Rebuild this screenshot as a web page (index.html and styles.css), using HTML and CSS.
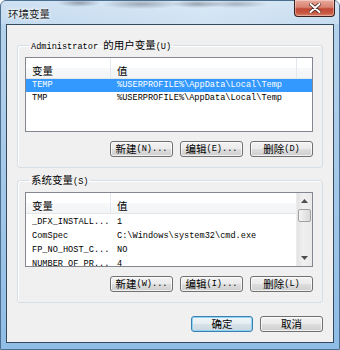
FILE: index.html
```html
<!DOCTYPE html>
<html lang="zh-CN">
<head>
<meta charset="utf-8">
<title>环境变量</title>
<link rel="stylesheet" href="styles.css">
</head>
<body>
<div class="window">
  <div class="titlebar">
    <span class="title">环境变量</span>
    <div class="close">
      <svg width="12" height="10" viewBox="0 0 12 10">
        <path d="M1.5 1 L10.5 9 M10.5 1 L1.5 9" stroke="#4a2a24" stroke-width="3.6" stroke-linecap="round"/>
        <path d="M1.5 1 L10.5 9 M10.5 1 L1.5 9" stroke="#ffffff" stroke-width="2" stroke-linecap="round"/>
      </svg>
    </div>
  </div>
  <div class="client">
    <fieldset class="group">
      <legend><span class="m">Administrator </span>的用户变量<span class="m">(U)</span></legend>
      <div class="list">
        <div class="hdr">
          <span class="c1">变量</span><span class="c2">值</span><span class="c3"></span>
        </div>
        <div class="row sel"><span class="c1 m">TEMP</span><span class="c2 m">%USERPROFILE%\AppData\Local\Temp</span></div>
        <div class="row"><span class="c1 m">TMP</span><span class="c2 m">%USERPROFILE%\AppData\Local\Temp</span></div>
      </div>
      <div class="btns">
        <button class="btn">新建<span class="m">(N)...</span></button>
        <button class="btn">编辑<span class="m">(E)...</span></button>
        <button class="btn">删除<span class="m">(D)</span></button>
      </div>
    </fieldset>
    <fieldset class="group g2">
      <legend>系统变量<span class="m">(S)</span></legend>
      <div class="list list2">
        <div class="lbody">
          <div class="hdr">
            <span class="c1">变量</span><span class="c2">值</span>
          </div>
          <div class="row"><span class="c1 m">_DFX_INSTALL...</span><span class="c2 m">1</span></div>
          <div class="row"><span class="c1 m">ComSpec</span><span class="c2 m">C:\Windows\system32\cmd.exe</span></div>
          <div class="row"><span class="c1 m">FP_NO_HOST_C...</span><span class="c2 m">NO</span></div>
          <div class="row"><span class="c1 m">NUMBER_OF_PR...</span><span class="c2 m">4</span></div>
        </div>
        <div class="sbar">
          <div class="arrow up"><svg width="7" height="4" viewBox="0 0 7 4"><path d="M0 4 L3.5 0 L7 4Z" fill="#4d4d4d"/></svg></div>
          <div class="thumb"></div>
          <div class="track"></div>
          <div class="arrow down"><svg width="7" height="4" viewBox="0 0 7 4"><path d="M0 0 L3.5 4 L7 0Z" fill="#4d4d4d"/></svg></div>
        </div>
      </div>
      <div class="btns">
        <button class="btn">新建<span class="m">(W)...</span></button>
        <button class="btn">编辑<span class="m">(I)...</span></button>
        <button class="btn">删除<span class="m">(L)</span></button>
      </div>
    </fieldset>
    <div class="dlgbtns">
      <button class="btn def">确定</button>
      <button class="btn">取消</button>
    </div>
  </div>
</div>
</body>
</html>
```
FILE: styles.css
```css
html, body {
  margin: 0;
  padding: 0;
  overflow: hidden;
}
body {
  width: 340px;
  height: 350px;
  font-family: "Noto Sans CJK SC", "Noto Sans", sans-serif;
  font-size: 10.5px;
  color: #000;
}
.window {
  box-sizing: border-box;
  width: 340px;
  height: 350px;
  border: 1px solid #4d6f8f;
  border-radius: 6px 6px 0 0;
  padding: 0 5px 6px 5px;
  background: linear-gradient(180deg, #c6dcf0 0%, #b5d2ec 8%, #a9cbe9 40%, #8fbde6 100%);
  display: flex;
  flex-direction: column;
}
.titlebar {
  height: 23px;
  display: flex;
  justify-content: space-between;
  align-items: flex-start;
  background:
    radial-gradient(ellipse 22px 4px at 78px 2px, rgba(70,80,95,0.45), rgba(70,80,95,0) 100%),
    radial-gradient(ellipse 40px 5px at 140px 3px, rgba(70,80,95,0.4), rgba(70,80,95,0) 100%),
    radial-gradient(ellipse 26px 4px at 196px 3px, rgba(70,80,95,0.45), rgba(70,80,95,0) 100%),
    radial-gradient(ellipse 32px 4px at 235px 3px, rgba(70,80,95,0.35), rgba(70,80,95,0) 100%),
    linear-gradient(90deg, rgba(255,255,255,0.15), rgba(255,255,255,0.35) 60%, rgba(255,255,255,0.2));
  margin: 0 -5px;
  padding: 0 5px;
}
.title {
  margin-top: 6px;
  margin-left: 2px;
  font-size: 10.5px;
  line-height: 14px;
  color: #1a1a1a;
  text-shadow: 0 0 4px #fff, 0 0 3px #fff;
}
.close {
  width: 39px;
  height: 16px;
  margin-right: -1px;
  margin-top: -1px;
  border: 1px solid #3b1f1a;
  border-top: none;
  border-radius: 0 0 4px 4px;
  background: linear-gradient(180deg, #e9a99a 0%, #d98373 45%, #c24a37 55%, #c8563f 80%, #d9826c 100%);
  box-shadow: inset 0 0 0 1px rgba(255,255,255,0.35);
  display: flex;
  align-items: center;
  justify-content: center;
}
.client {
  flex: 1;
  border: 1px solid #34495e;
  background: #f0f0f0;
  padding: 14px 10px 0 10px;
  display: flex;
  flex-direction: column;
}
.m {
  font-family: "Liberation Mono", monospace;
  font-size: 8.6px;
}
.group {
  margin: 0;
  border: 1px solid #d5dfe5;
  border-radius: 3px;
  padding: 6px 9px 10px 7px;
  min-width: 0;
  box-shadow: inset 1px 1px 0 #fff;
}
.group legend {
  padding: 0 2px;
  margin-left: 4px;
  line-height: 12px;
  height: 12px;
  font-size: 10.5px;
}
.g2 {
  margin-top: 6px;
}
.list {
  height: 75px;
  box-sizing: border-box;
  border: 1px solid #828790;
  background: #fff;
  overflow: hidden;
}
.list2 {
  display: flex;
}
.lbody {
  flex: 1;
  min-width: 0;
  overflow: hidden;
}
.hdr {
  height: 21px;
  box-sizing: border-box;
  display: flex;
  align-items: center;
  background: linear-gradient(180deg, #ffffff 0%, #ffffff 50%, #f7f8fa 51%, #f3f4f6 100%);
  border-bottom: 1px solid #e5e5e5;
  font-size: 10.5px;
}
.hdr span {
  height: 100%;
  display: flex;
  align-items: center;
  box-sizing: border-box;
  padding-top: 4px;
}
.c1 {
  width: 85px;
  flex: none;
  padding-left: 6px;
  box-sizing: border-box;
  white-space: nowrap;
  overflow: hidden;
}
.c2 {
  flex: 1;
  padding-left: 6px;
  white-space: nowrap;
  overflow: hidden;
}
.hdr .c1 {
  border-right: 1px solid #e3e8ee;
}
.hdr .c2 {
  border-right: 1px solid #e3e8ee;
}
.hdr .c3 {
  width: 15px;
  flex: none;
}
.list2 .hdr .c2 {
  border-right: none;
}
.row {
  height: 13px;
  display: flex;
  align-items: center;
  line-height: 13px;
  flex: none;
}
.list2 .row {
  height: 14px;
  box-sizing: border-box;
  padding-top: 3px;
}
.row.sel {
  background: #3399ff;
  color: #fff;
}
.sbar {
  width: 15px;
  flex: none;
  display: flex;
  flex-direction: column;
  background: linear-gradient(90deg, #e3e3e3, #f0f0f0 40%, #eaeaea);
  border-left: 1px solid #ececec;
}
.arrow {
  height: 16px;
  display: flex;
  align-items: center;
  justify-content: center;
}
.thumb {
  height: 13px;
  margin: 0 1px;
  border: 1px solid #a2a2a2;
  border-radius: 2px;
  background: linear-gradient(90deg, #f4f4f4, #e6e6e6 50%, #d9d9d9);
  box-sizing: border-box;
}
.track {
  flex: 1;
}
.btns {
  display: flex;
  justify-content: flex-end;
  gap: 7px;
  margin-top: 9px;
}
.btn {
  width: 63px;
  height: 16px;
  margin: 0;
  padding: 0;
  box-sizing: border-box;
  border: 1px solid #707070;
  border-radius: 3px;
  background: linear-gradient(180deg, #f2f2f2 0%, #ebebeb 48%, #dddddd 52%, #cfcfcf 100%);
  box-shadow: inset 0 0 0 1px rgba(255,255,255,0.7);
  font-family: "Noto Sans CJK SC", sans-serif;
  font-size: 10.5px;
  line-height: 14px;
  color: #000;
  display: flex;
  align-items: center;
  justify-content: center;
}
.btn.def {
  width: 62px;
  border-color: #3c7fb1;
  box-shadow: inset 0 0 0 1px #8fd3f2;
  background: linear-gradient(180deg, #f0f5f8 0%, #e6eef3 48%, #d6e1e8 52%, #cbd8e0 100%);
}
.dlgbtns {
  display: flex;
  justify-content: flex-end;
  gap: 7px;
  margin-top: 13px;
}
```
